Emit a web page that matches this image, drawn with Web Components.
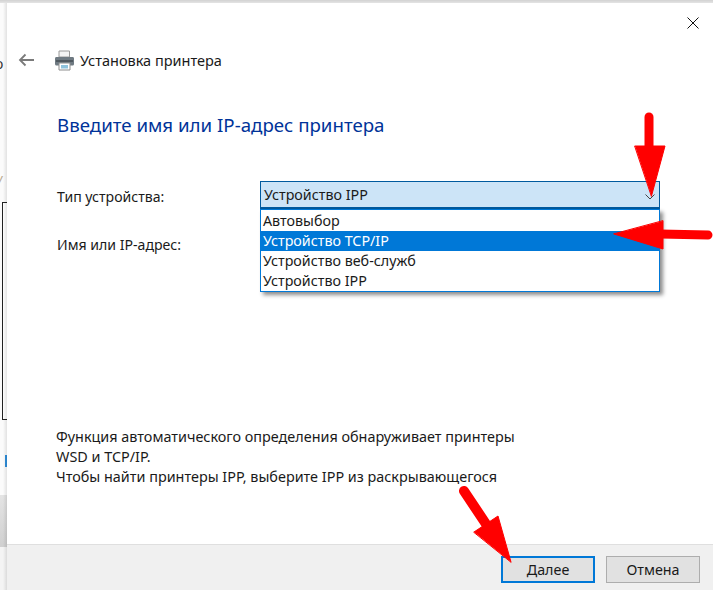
<!DOCTYPE html>
<html lang="ru">
<head>
<meta charset="utf-8">
<title>Установка принтера</title>
<style>
  html, body { margin: 0; padding: 0; background: #fff; }
  body { font-family: "Noto Sans", "Open Sans", sans-serif; overflow: hidden; }
</style>
</head>
<body>
<wizard-screen>
  <back-window slot="behind"></back-window>
  <printer-dialog>
    <span slot="title">Установка принтера</span>
    <span slot="heading">Введите имя или IP-адрес принтера</span>
    <field-row slot="fields" label="Тип устройства:">
      <combo-box value="Устройство IPP" selected="1">
        <option>Автовыбор</option>
        <option>Устройство TCP/IP</option>
        <option>Устройство веб-служб</option>
        <option>Устройство IPP</option>
      </combo-box>
    </field-row>
    <field-row slot="fields" label="Имя или IP-адрес:"></field-row>
    <span slot="info">Функция автоматического определения обнаруживает принтеры<br>WSD и TCP/IP.<br>Чтобы найти принтеры IPP, выберите IPP из раскрывающегося</span>
    <dialog-button slot="buttons" primary>Далее</dialog-button>
    <dialog-button slot="buttons">Отмена</dialog-button>
  </printer-dialog>
  <red-arrows slot="overlay"></red-arrows>
</wizard-screen>

<script>
class WizardScreen extends HTMLElement {
  constructor() {
    super();
    this.attachShadow({ mode: 'open' });
    this.shadowRoot.innerHTML = `
      <style>
        :host { display: block; position: relative; width: 713px; height: 590px; overflow: hidden; }
        .top { height: 3px; background: linear-gradient(#d2d2d2, #e4e4e4); }
        .main { display: flex; height: 587px; }
      </style>
      <div class="top"></div>
      <div class="main">
        <slot name="behind"></slot>
        <slot></slot>
      </div>
      <slot name="overlay"></slot>
    `;
  }
}

// the window that peeks out on the left of the dialog
class BackWindow extends HTMLElement {
  constructor() {
    super();
    this.attachShadow({ mode: 'open' });
    this.shadowRoot.innerHTML = `
      <style>
        :host { display: flex; flex-direction: column; width: 7px; flex: none; position: relative; overflow: hidden;
                background: #fbfbfb; font-size: 14px; color: #333; }
        .glyph { height: 20px; line-height: 20px; margin-left: -5px; }
        .one { margin-top: 51px; }
        .two { margin-top: 96px; color: #b9a98f; font-size: 13px; }
        .frame { height: 216px; margin: 12px 0 0 2px; border: 1px solid #222; border-right: 0; background: #fff; }
        .tick { width: 2px; height: 12px; margin: 35px 0 0 5px; background: #2f8fdc; }
        .band { height: 52px; margin-top: 28px; background: linear-gradient(#e4e4e4, #d0d0d0); }
        .rest { flex: 1; background: #f4f4f4; }
        .shade { position: absolute; inset: 0 0 0 auto; width: 4px; background: linear-gradient(90deg, rgba(0,0,0,0), rgba(0,0,0,.1)); }
      </style>
      <div class="glyph one">о</div>
      <div class="glyph two">У</div>
      <div class="frame"></div>
      <div class="tick"></div>
      <div class="band"></div>
      <div class="rest"></div>
      <div class="shade"></div>
    `;
  }
}

class PrinterDialog extends HTMLElement {
  constructor() {
    super();
    this.attachShadow({ mode: 'open' });
    this.shadowRoot.innerHTML = `
      <style>
        :host { display: flex; flex-direction: column; flex: 1; min-width: 0; background: #fff; color: #1a1a1a; font-size: 14px; }
        .close { display: flex; justify-content: flex-end; box-sizing: border-box; height: 47px; padding: 13px 13px 0 0; }
        .close svg { width: 14px; height: 14px; }
        .head { display: flex; align-items: center; height: 20px; padding-left: 11px; }
        .back { width: 16px; height: 14px; margin-right: 20px; }
        .printer { width: 21px; height: 21px; margin-right: 5px; }
        .title { font-size: 14.5px; line-height: 20px; white-space: nowrap; }
        .heading { margin: 42px 0 0 50px; font-size: 18.7px; line-height: 26px; color: #003399; white-space: nowrap; }
        .fields { display: flex; flex-direction: column; margin: 43px 0 0 50px; gap: 20px; }
        .info { margin: 0 0 0 49px; font-size: 14.4px; line-height: 20px; white-space: nowrap; }
        .body { flex: 1; display: flex; flex-direction: column; min-height: 0; }
        .spacer { flex: 1; }
        .foot { display: flex; justify-content: flex-end; gap: 11px; height: 46px; box-sizing: border-box;
                padding: 11px 13px 0 0; background: #f0f0f0; border-top: 1px solid #dfdfdf; }
        .info-wrap { padding-bottom: 57px; }
      </style>
      <div class="close">
        <svg viewBox="0 0 14 14" fill="none" stroke="#111" stroke-width="1"><path d="M1.5 1.5l11 11M12.5 1.5l-11 11"/></svg>
      </div>
      <div class="head">
        <svg class="back" viewBox="0 0 16 14" fill="none" stroke="#7a7a7a" stroke-width="1.8"><path d="M16 7H2M7.500 1.500L2 7l5.500 5.500"/></svg>
        <svg class="printer" viewBox="0 0 21 21">
          <path d="M5 1h10.500v6H5z" fill="#f4f4f4" stroke="#9a9a9a"/>
          <path d="M2.500 7h16c1 0 1.500.6 1.500 1.500V14c0 .8-.5 1.500-1.500 1.500h-16C1.500 15.500 1 14.800 1 14V8.500C1 7.600 1.500 7 2.500 7z" fill="#6f7a82"/>
          <path d="M2 10h17v2H2z" fill="#4f585f"/>
          <path d="M5 13h11v7H5z" fill="#fff" stroke="#8d8d8d"/>
          <path d="M7 15h7v3.500H7z" fill="#8fc3dd"/>
        </svg>
        <div class="title"><slot name="title"></slot></div>
      </div>
      <div class="heading"><slot name="heading"></slot></div>
      <div class="body">
        <div class="fields"><slot name="fields"></slot></div>
        <div class="spacer"></div>
        <div class="info-wrap"><div class="info"><slot name="info"></slot></div></div>
      </div>
      <div class="foot"><slot name="buttons"></slot></div>
    `;
  }
}

class FieldRow extends HTMLElement {
  constructor() {
    super();
    this.attachShadow({ mode: 'open' });
    this.shadowRoot.innerHTML = `
      <style>
        :host { display: flex; align-items: center; min-height: 28px; }
        .label { width: 203px; flex: none; margin-top: 4px; font-size: 14.1px; line-height: 20px; white-space: nowrap; }
        ::slotted(combo-box) { margin-top: 0; }
      </style>
      <div class="label"></div>
      <slot></slot>
    `;
  }

  connectedCallback() {
    this.shadowRoot.querySelector('.label').textContent = this.getAttribute('label');
  }
}

class ComboBox extends HTMLElement {
  constructor() {
    super();
    this.attachShadow({ mode: 'open' });
    this.shadowRoot.innerHTML = `
      <style>
        :host { display: block; position: relative; width: 400px; height: 28px; font-size: 14.3px; color: #1a1a1a; }
        .box { display: flex; align-items: center; justify-content: space-between; height: 28px; box-sizing: border-box;
               padding: 0 4px 0 3px; background: #cce4f7; border: 1px solid #005a9e; border-bottom-width: 2px; }
        .box svg { width: 10px; height: 6px; margin-top: 4px; }
        .list { position: absolute; left: 0; top: 28px; width: 400px; box-sizing: border-box; background: #fff;
                border: 1px solid #0078d7; box-shadow: 3px 3px 4px rgba(0,0,0,.45); padding-top: 1px; }
        .item { height: 20px; line-height: 20px; padding-left: 2px; white-space: nowrap; }
        .item.on { background: #0078d7; color: #fff; }
      </style>
      <div class="box">
        <span class="value"></span>
        <svg viewBox="0 0 10 6" fill="none" stroke="#444" stroke-width="1"><path d="M.5.500L5 5l4.500-4.500"/></svg>
      </div>
      <div class="list"></div>
    `;
  }

  connectedCallback() {
    const list = this.shadowRoot.querySelector('.list');
    const selected = Number(this.getAttribute('selected'));
    this.shadowRoot.querySelector('.value').textContent = this.getAttribute('value');
    this.querySelectorAll('option').forEach((option, index) => {
      const item = document.createElement('div');
      item.className = index === selected ? 'item on' : 'item';
      item.textContent = option.textContent;
      list.appendChild(item);
    });
  }
}

class DialogButton extends HTMLElement {
  constructor() {
    super();
    this.attachShadow({ mode: 'open' });
    this.shadowRoot.innerHTML = `
      <style>
        :host { display: flex; align-items: center; justify-content: center; width: 94px; height: 27px; box-sizing: border-box;
                background: #e1e1e1; border: 1px solid #adadad; font-size: 14.3px; color: #1a1a1a; }
        :host([primary]) { border: 2px solid #0078d7; }
      </style>
      <slot></slot>
    `;
  }
}

// hand drawn annotations lying over the whole screenshot
class RedArrows extends HTMLElement {
  constructor() {
    super();
    this.attachShadow({ mode: 'open' });
    this.shadowRoot.innerHTML = `
      <style>
        :host { display: block; position: absolute; inset: 0; pointer-events: none; }
        svg { display: block; width: 713px; height: 590px; }
      </style>
      <svg viewBox="0 0 713 590" fill="#ff0000" stroke="#ff0000" stroke-linecap="round">
        <path d="M649 117L649 150" stroke-width="9" fill="none"/>
        <path d="M635 146L665 146L651.500 196Z" stroke-width="1"/>
        <path d="M660 234L708 235" stroke-width="9" fill="none"/>
        <path d="M663 221L663 249L614 234Z" stroke-width="1"/>
        <path d="M464 491L486 524" stroke-width="10" fill="none"/>
        <path d="M474 532L498 516L511 562Z" stroke-width="1"/>
      </svg>
    `;
  }
}

customElements.define('wizard-screen', WizardScreen);
customElements.define('back-window', BackWindow);
customElements.define('printer-dialog', PrinterDialog);
customElements.define('field-row', FieldRow);
customElements.define('combo-box', ComboBox);
customElements.define('dialog-button', DialogButton);
customElements.define('red-arrows', RedArrows);
</script>
</body>
</html>
